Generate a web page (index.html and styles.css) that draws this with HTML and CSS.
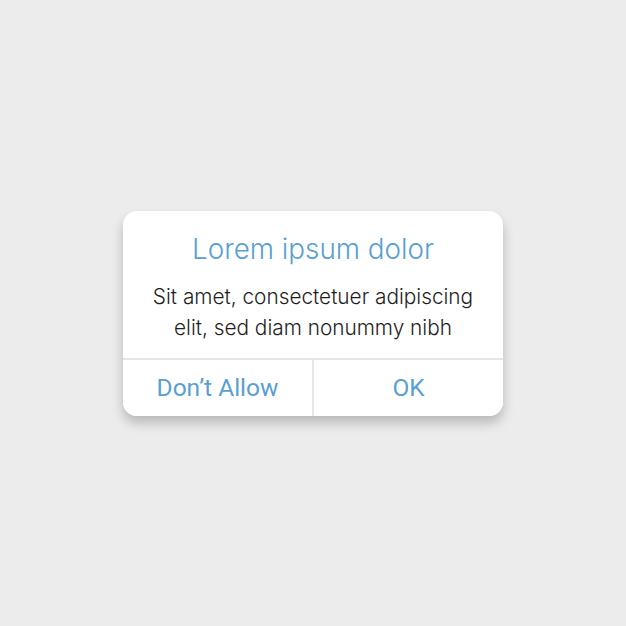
FILE: index.html
```html
<!DOCTYPE html>
<html lang="en">
<head>
    <meta charset="UTF-8">
    <meta name="viewport" content="width=device-width, initial-scale=1.0">
    <title>Alert</title>
    <link rel="stylesheet" href="styles.css">
</head>
<body>
    <div class="alert">
        <div class="alert-body">
            <h1 class="alert-title">Lorem ipsum dolor</h1>
            <p class="alert-text">Sit amet, consectetuer adipiscing<br>elit, sed diam nonummy nibh</p>
        </div>
        <div class="alert-actions">
            <button class="alert-btn">Don’t Allow</button>
            <button class="alert-btn">OK</button>
        </div>
    </div>
</body>
</html>
```

FILE: styles.css
```css
html, body {
    height: 100%;
}
body {
    margin: 0;
    background-color: #ececec;
    display: flex;
    align-items: center;
    justify-content: center;
}
.alert {
    width: 380px;
    background-color: #fff;
    border-radius: 14px;
    box-shadow: 0 7px 12px rgba(0, 0, 0, 0.22);
    overflow: hidden;
}
.alert-body {
    padding: 21px 8px 15px;
    text-align: center;
}
.alert-title {
    margin: 0;
    font-family: Inter, sans-serif;
    font-weight: 300;
    font-size: 27.8px;
    line-height: 34px;
    color: #5a9fd3;
}
.alert-text {
    margin: 15px 0 0;
    font-family: Inter, sans-serif;
    font-weight: 300;
    font-size: 20.8px;
    line-height: 31px;
    color: #1e1e1e;
}
.alert-actions {
    display: flex;
    border-top: 2px solid #e6e6e6;
}
.alert-btn {
    flex: 1;
    height: 56px;
    border: none;
    background: #fff;
    font-family: Roboto, sans-serif;
    font-size: 24.5px;
    color: #5a9fd3;
    padding: 0;
}
.alert-btn + .alert-btn {
    border-left: 2px solid #e6e6e6;
}
```
